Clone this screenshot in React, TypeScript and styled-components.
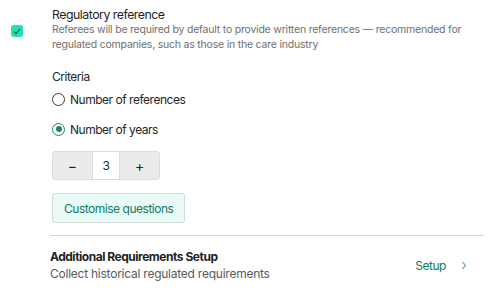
import React, { useState } from "react";
import styled, { createGlobalStyle } from "styled-components";

const Global = createGlobalStyle`
  html, body { margin: 0; padding: 0; background: #fff; }
  body { font-family: Inter, "Noto Sans", Arial, sans-serif; color: #1f1f1f; -webkit-font-smoothing: antialiased; letter-spacing: -0.03em; }
`;

const Page = styled.div`
  width: 489px;
  height: 291px;
  overflow: hidden;
  display: flex;
  flex-direction: column;
`;

const Option = styled.div`
  display: flex;
  align-items: flex-start;
  padding: 6px 0 0 11px;
`;

const CheckBox = styled.div`
  width: 12px;
  height: 12px;
  margin-top: 19px;
  border-radius: 3px;
  background: #1fe3b3;
  display: flex;
  align-items: center;
  justify-content: center;
  flex-shrink: 0;
`;

const Body = styled.div`
  margin-left: 29px;
  display: flex;
  flex-direction: column;
`;

const Title = styled.div`
  font-size: 12.3px;
  line-height: 17px;
  color: #1f1f1f;
`;

const Description = styled.div`
  font-size: 10.5px;
  line-height: 14.5px;
  letter-spacing: -0.02em;
  color: #707070;
  width: 420px;
`;

const Label = styled.div`
  font-size: 12px;
  line-height: 16px;
  margin-top: 17px;
  color: #262626;
`;

const RadioRow = styled.label<{ $mt: number }>`
  display: flex;
  align-items: center;
  gap: 5px;
  height: 16px;
  margin-top: ${(p) => p.$mt}px;
  font-size: 12px;
  color: #262626;
`;

const RadioCircle = styled.span<{ $on: boolean }>`
  width: 13px;
  height: 13px;
  box-sizing: border-box;
  border-radius: 50%;
  border: 1.5px solid ${(p) => (p.$on ? "#128a6e" : "#3a3a3a")};
  display: flex;
  align-items: center;
  justify-content: center;
  &::after {
    content: "";
    display: ${(p) => (p.$on ? "block" : "none")};
    width: 6px;
    height: 6px;
    border-radius: 50%;
    background: #128a6e;
  }
`;

const Stepper = styled.div`
  display: flex;
  margin-top: 14px;
  width: 108px;
  height: 29px;
  border: 1px solid #dcdcdc;
  border-radius: 3px;
  box-sizing: border-box;
  overflow: hidden;
`;

const StepBtn = styled.button`
  width: 40px;
  border: none;
  background: #ebebeb;
  font-family: inherit;
  font-size: 14px;
  color: #222;
  padding: 0;
`;

const StepValue = styled.div`
  width: 28px;
  display: flex;
  align-items: center;
  justify-content: center;
  font-size: 12px;
  border-left: 1px solid #dcdcdc;
  border-right: 1px solid #dcdcdc;
  background: #fff;
`;

const GhostButton = styled.button`
  margin-top: 13px;
  align-self: flex-start;
  height: 30px;
  padding: 0 11px;
  border: 1px solid #d2dcd9;
  border-radius: 3px;
  background: #eafbf7;
  color: #117a62;
  font-family: inherit;
  letter-spacing: inherit;
  font-size: 12px;
`;

const Divider = styled.div`
  margin: 12px 5px 0 50px;
  height: 1px;
  background: #d6d6d6;
`;

const SetupRow = styled.div`
  display: flex;
  align-items: center;
  padding: 12px 22px 0 50px;
`;

const SetupText = styled.div`
  flex: 1;
  display: flex;
  flex-direction: column;
`;

const SetupTitle = styled.div`
  font-size: 12px;
  font-weight: 700;
  line-height: 17px;
  color: #1f1f1f;
`;

const SetupSub = styled.div`
  font-size: 12px;
  line-height: 17px;
  letter-spacing: -0.02em;
  color: #5a5a5a;
`;

const SetupLink = styled.div`
  display: flex;
  align-items: center;
  gap: 15px;
  color: #117a62;
  font-size: 12px;
`;

export default function App() {
  const [val, setVal] = useState(3);
  return (
    <Page>
      <Global />
      <Option>
        <CheckBox>
          <svg width="8" height="7" viewBox="0 0 8 7">
            <path d="M1 3.6 L3 5.6 L7 1.2" fill="none" stroke="#1d4a40" strokeWidth="1.1" />
          </svg>
        </CheckBox>
        <Body>
          <Title>Regulatory reference</Title>
          <Description>
            Referees will be required by default to provide written references — recommended for regulated companies, such as those in the care industry
          </Description>
          <Label>Criteria</Label>
          <RadioRow $mt={6}>
            <RadioCircle $on={false} />
            Number of references
          </RadioRow>
          <RadioRow $mt={14}>
            <RadioCircle $on={true} />
            Number of years
          </RadioRow>
          <Stepper>
            <StepBtn onClick={() => setVal(val - 1)}>−</StepBtn>
            <StepValue>{val}</StepValue>
            <StepBtn onClick={() => setVal(val + 1)}>+</StepBtn>
          </Stepper>
          <GhostButton>Customise questions</GhostButton>
        </Body>
      </Option>
      <Divider />
      <SetupRow>
        <SetupText>
          <SetupTitle>Additional Requirements Setup</SetupTitle>
          <SetupSub>Collect historical regulated requirements</SetupSub>
        </SetupText>
        <SetupLink>
          Setup
          <svg width="6" height="9" viewBox="0 0 6 9">
            <path d="M1.5 1 L4.5 4.5 L1.5 8" fill="none" stroke="#6fb3a3" strokeWidth="1.2" />
          </svg>
        </SetupLink>
      </SetupRow>
    </Page>
  );
}
